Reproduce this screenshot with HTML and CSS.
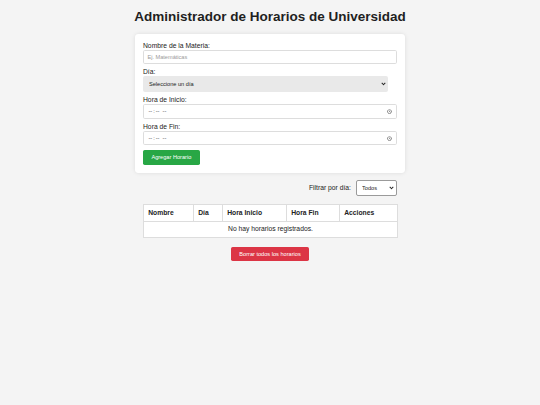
FILE: index.html
```html
<!DOCTYPE html>
<html lang="es">
<head>
<meta charset="utf-8">
<title>Administrador de Horarios de Universidad</title>
<link rel="stylesheet" href="styles.css">
</head>
<body>
<h1 class="title">Administrador de Horarios de Universidad</h1>
<main class="container">
  <form class="card">
    <label class="label" for="materia">Nombre de la Materia:</label>
    <input class="field text-field" id="materia" type="text" placeholder="Ej. Matemáticas">
    <label class="label" for="dia">Día:</label>
    <span class="select-wrap day-wrap">
      <select class="day-select" id="dia"><option>Seleccione un día</option></select>
    </span>
    <label class="label" for="inicio">Hora de Inicio:</label>
    <input class="field time-field" id="inicio" type="time">
    <label class="label" for="fin">Hora de Fin:</label>
    <input class="field time-field" id="fin" type="time">
    <button type="button" class="btn btn-green">Agregar Horario</button>
  </form>

  <section class="results">
    <div class="filter">
      <label class="filter-label" for="filtro">Filtrar por día:</label>
      <span class="select-wrap filter-wrap">
        <select class="filter-select" id="filtro"><option>Todos</option></select>
      </span>
    </div>

    <table class="schedule">
      <colgroup>
        <col class="c-nombre"><col class="c-dia"><col class="c-inicio"><col class="c-fin"><col class="c-acciones">
      </colgroup>
      <thead>
        <tr><th>Nombre</th><th>Día</th><th>Hora Inicio</th><th>Hora Fin</th><th>Acciones</th></tr>
      </thead>
      <tbody>
        <tr><td class="empty" colspan="5">No hay horarios registrados.</td></tr>
      </tbody>
    </table>

    <div class="actions">
      <button type="button" class="btn btn-red">Borrar todos los horarios</button>
    </div>
  </section>
</main>
</body>
</html>
```

FILE: styles.css
```css
body {
  margin: 0;
  padding-top: 9px;
  background: #f4f4f4;
  font-family: "Liberation Sans", Arial, sans-serif;
  font-size: 6.75px;
  color: #222;
}

.title {
  margin: 0 0 9.5px;
  text-align: center;
  font-size: 13.5px;
  line-height: 15.5px;
  font-weight: bold;
  color: #1f1f1f;
}

.container {
  width: 270px;
  margin: 0 auto;
}

.card {
  display: flex;
  flex-direction: column;
  align-items: flex-start;
  background: #fff;
  padding: 8.4px 8px 8px;
  border-radius: 3.4px;
  box-shadow: 0 0 4px rgba(0, 0, 0, 0.1);
}

.label {
  display: block;
  line-height: 7.8px;
  color: #222;
}

.field {
  box-sizing: border-box;
  width: 100%;
  margin: 0 0 4.4px;
  font-family: inherit;
  font-size: 5.625px;
  color: #444;
  background: #fff;
  border: 1px solid #ddd;
  border-radius: 1.7px;
  padding: 0 3.4px;
}

.text-field {
  height: 13.5px;
}

.text-field::placeholder {
  color: #9a9a9a;
}

.time-field {
  height: 14.5px;
}

.time-field::-webkit-calendar-picker-indicator {
  width: 5px;
  height: 5px;
  padding: 0;
  margin: 0 1px 0 0;
}

.select-wrap {
  position: relative;
  display: block;
}

.select-wrap::after {
  content: "";
  position: absolute;
  top: 50%;
  width: 2px;
  height: 2px;
  border-right: 1.2px solid #222;
  border-bottom: 1.2px solid #222;
  transform: translateY(-75%) rotate(45deg);
  pointer-events: none;
}

.day-wrap {
  width: calc(100% - 9px);
  margin: 0 0 4.4px;
}

.day-wrap::after {
  right: 3px;
}

.day-select {
  appearance: none;
  box-sizing: border-box;
  width: 100%;
  height: 16px;
  margin: 0;
  padding: 0 6px;
  border: none;
  border-radius: 2px;
  background: #e9e9e9;
  font-family: inherit;
  font-size: 5.625px;
  color: #222;
}

.btn {
  border: none;
  border-radius: 1.7px;
  color: #fff;
  font-family: inherit;
  font-size: 5.625px;
  line-height: 6.5px;
  padding: 4.2px 8.4px;
  cursor: pointer;
}

.btn-green {
  background: #28a745;
}

.btn-red {
  background: #dc3545;
}

.results {
  padding: 0 8px;
}

.filter {
  display: flex;
  justify-content: flex-end;
  align-items: center;
  gap: 5px;
  margin: 7.5px 0 8px;
}

.filter-label {
  line-height: 7.8px;
}

.filter-wrap {
  width: 41px;
}

.filter-wrap::after {
  right: 4px;
}

.filter-select {
  appearance: none;
  box-sizing: border-box;
  width: 100%;
  height: 16px;
  margin: 0;
  padding: 0 5px;
  border: 1px solid #9a9a9a;
  border-radius: 2px;
  background: #fff;
  font-family: inherit;
  font-size: 5.625px;
  color: #222;
}

.schedule {
  width: 100%;
  table-layout: fixed;
  border-collapse: collapse;
  background: #fff;
}

.c-nombre { width: 50px; }
.c-dia { width: 29px; }
.c-inicio { width: 64px; }
.c-fin { width: 53px; }
.c-acciones { width: 58px; }

.schedule th,
.schedule td {
  border: 1px solid #ddd;
  padding: 3.9px 4.2px;
  line-height: 7.8px;
  text-align: left;
  color: #222;
}

.schedule th {
  font-weight: bold;
}

.schedule .empty {
  text-align: center;
}

.actions {
  display: flex;
  justify-content: center;
  margin-top: 8.4px;
}
```
